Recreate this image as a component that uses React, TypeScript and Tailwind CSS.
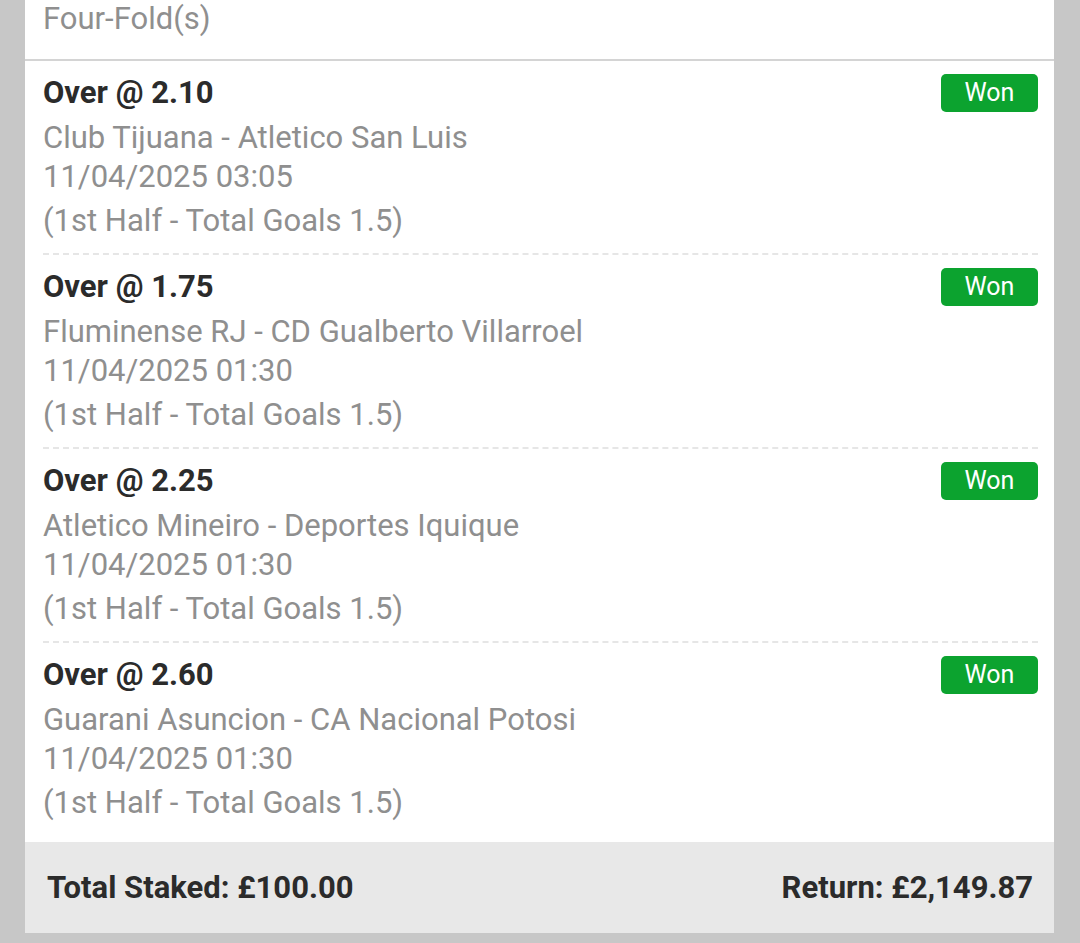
type Leg = {
  selection: string;
  odds: string;
  event: string;
  date: string;
  market: string;
};

const legs: Leg[] = [
  {
    selection: "Over",
    odds: "2.10",
    event: "Club Tijuana - Atletico San Luis",
    date: "11/04/2025 03:05",
    market: "(1st Half - Total Goals 1.5)",
  },
  {
    selection: "Over",
    odds: "1.75",
    event: "Fluminense RJ - CD Gualberto Villarroel",
    date: "11/04/2025 01:30",
    market: "(1st Half - Total Goals 1.5)",
  },
  {
    selection: "Over",
    odds: "2.25",
    event: "Atletico Mineiro - Deportes Iquique",
    date: "11/04/2025 01:30",
    market: "(1st Half - Total Goals 1.5)",
  },
  {
    selection: "Over",
    odds: "2.60",
    event: "Guarani Asuncion - CA Nacional Potosi",
    date: "11/04/2025 01:30",
    market: "(1st Half - Total Goals 1.5)",
  },
];

function LegRow({ leg, last }: { leg: Leg; last: boolean }) {
  return (
    <div className={`pl-[18px] pr-[16px] pt-[10px] ${last ? "pb-[17px]" : "pb-0"}`}>
      <div className="flex h-[43px] items-center justify-between">
        <span className="text-[31px] font-bold leading-[43px] text-[#2b2b2b]">
          {leg.selection} @ {leg.odds}
        </span>
        <span className="flex h-[38px] w-[97px] items-center justify-center rounded-[5px] bg-[#0ca32f] text-[25px] leading-none text-white">
          Won
        </span>
      </div>
      <div className="pt-[2px] text-[31px] leading-[43px] text-[#8f8f8f]">{leg.event}</div>
      <div className="-mt-[4px] text-[31px] leading-[43px] text-[#8f8f8f]">{leg.date}</div>
      <div className="mt-[1px] text-[31px] leading-[43px] text-[#8f8f8f]">{leg.market}</div>
      {!last && <div className="mt-[11px] border-t-2 border-dashed border-[#e6e6e6]" />}
    </div>
  );
}

export default function App() {
  return (
    <div
      className="flex h-[943px] flex-col bg-[#c7c7c7] pb-[10px] pl-[25px] pr-[26px]"
      style={{ fontFamily: "Roboto, 'Liberation Sans', sans-serif" }}
    >
      <div className="flex flex-1 flex-col bg-white">
        <div className="h-[61px] overflow-hidden border-b-2 border-[#d4d4d4] pl-[18px] pt-[1px]">
          <span className="text-[31px] leading-[36px] text-[#8f8f8f]">Four-Fold(s)</span>
        </div>
        {legs.map((leg, i) => (
          <LegRow key={i} leg={leg} last={i === legs.length - 1} />
        ))}
        <div className="mt-auto flex h-[91px] items-center justify-between bg-[#e8e8e8] pl-[22px] pr-[21px] text-[31px] font-bold leading-[44px] text-[#2b2b2b]">
          <span>Total Staked: £100.00</span>
          <span>Return: £2,149.87</span>
        </div>
      </div>
    </div>
  );
}
